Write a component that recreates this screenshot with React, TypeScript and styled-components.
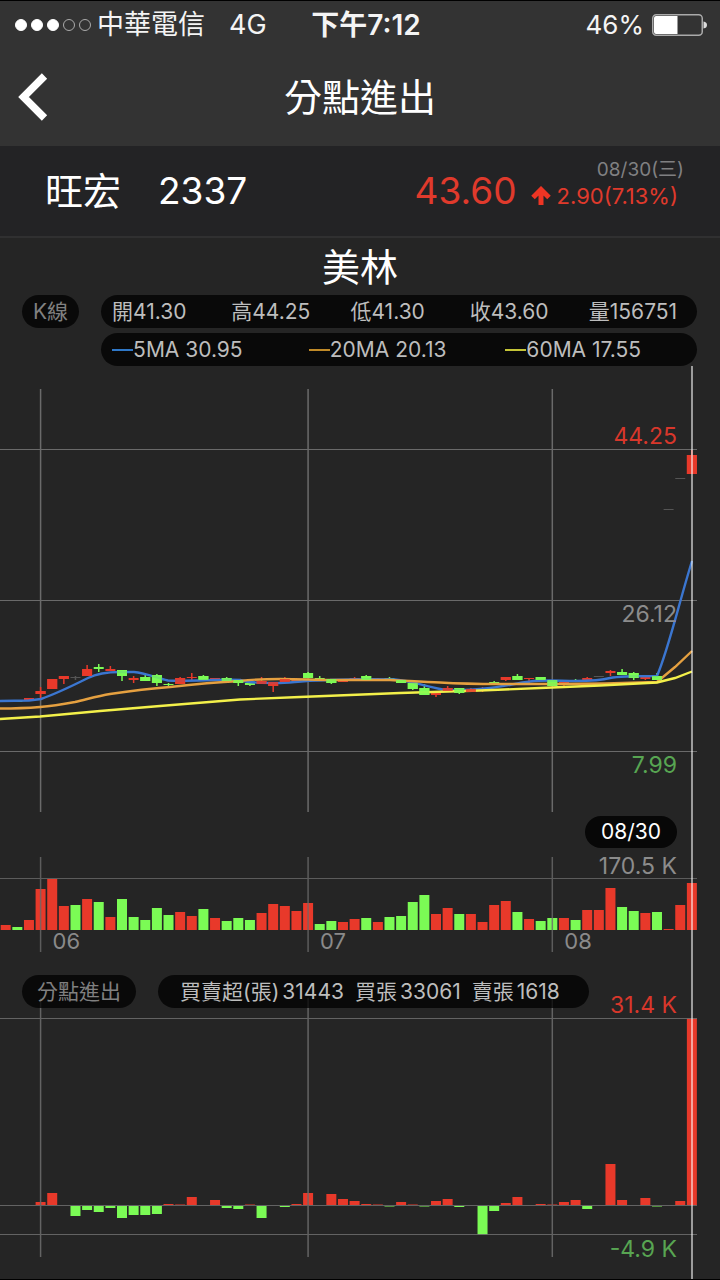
import React from "react";
import styled, { createGlobalStyle } from "styled-components";

const RED = "#e8392a";
const GREEN = "#7bfb55";
const SLOT = 11.63;
const FIRST = 5.7;

type Tone = "r" | "g" | "n";
type Candle = [tone: Tone, top: number, bottom: number, high: number, low: number];

const candles: Candle[] = [
  ["n", 700, 702, 700, 702], ["g", 700, 702, 700, 702], ["r", 698, 700, 698, 700],
  ["r", 691, 694, 687, 698], ["r", 679, 689, 679, 689], ["r", 676, 679, 676, 684],
  ["n", 677, 678, 676, 680], ["r", 669, 676, 665, 676], ["g", 667, 669, 664, 672],
  ["r", 669, 671, 666, 671], ["g", 670, 676, 670, 681], ["r", 678, 680, 676, 683],
  ["g", 677, 681, 675, 681], ["g", 675, 683, 674, 686], ["g", 684, 685, 683, 687],
  ["r", 678, 684, 677, 684], ["r", 677, 678, 673, 680], ["g", 676, 680, 675, 681],
  ["r", 678, 680, 678, 680], ["g", 678, 681, 677, 681], ["g", 680, 683, 679, 686],
  ["g", 683, 685, 682, 686], ["r", 681, 684, 677, 684], ["r", 682, 686, 682, 692],
  ["r", 679, 682, 677, 682], ["r", 679, 681, 678, 681], ["g", 673, 678, 672, 678],
  ["g", 678, 679, 676, 679], ["g", 679, 683, 679, 684], ["r", 680, 682, 679, 682],
  ["r", 678, 680, 677, 681], ["g", 676, 680, 675, 680], ["r", 679, 680, 678, 681],
  ["g", 678, 679, 677, 680], ["g", 680, 683, 680, 683], ["g", 683, 689, 682, 690],
  ["g", 688, 695, 684, 695], ["r", 693, 695, 693, 697], ["r", 688, 691, 686, 692],
  ["g", 688, 693, 688, 694], ["r", 689, 692, 688, 692], ["r", 689, 690, 687, 692],
  ["g", 682, 683, 681, 683], ["r", 677, 680, 677, 681], ["g", 676, 680, 674, 680],
  ["r", 678, 679, 678, 683], ["g", 677, 680, 677, 681], ["g", 680, 686, 680, 686],
  ["r", 682, 684, 680, 686], ["g", 681, 682, 679, 682], ["r", 678, 680, 677, 681],
  ["n", 676, 677, 676, 677], ["r", 671, 673, 670, 676], ["g", 672, 675, 669, 675],
  ["g", 673, 678, 672, 680], ["r", 677, 679, 676, 680], ["g", 676, 680, 673, 680],
  ["n", 509, 510, 509, 510], ["n", 478, 479, 478, 479], ["r", 455, 474, 450, 474],
];

const ma5 =
  "M0 701L29 700.500L41 699C55 694 72 686 88 678C96 674 108 672 120 672H134C146 673 156 678 168 680.500C192 681.500 220 679 240 680C250 683 262 683 280 683C300 682 312 680 330 680C355 679 380 679 395 679.500C412 681 424 686 443 689.500C456 691 470 690 485 688.500C503 687 516 683 530 681.500C545 679.500 560 681 575 681C590 681 603 680 610 678C620 676 640 676 657 676C668 651 679 603 692 561";
const ma20 =
  "M0 708.500C15 708.500 28 708 40 707C52 706 64 704 75 702C88 699 98 696 110 694C130 691 150 688.500 170 687C195 684 217 682 240 681C258 679 270 679 280 679C300 679 315 680 330 680H390C410 681 425 682 440 682.500C465 684 480 684 500 684H560C595 684 630 683 657 682L675 667L692 651";
const ma60 =
  "M0 719L40 716.500L100 711L160 706L240 699.500L300 697L400 693L480 690.500L540 688L600 685.500L657 682.500L675 678L692 671.500";

const volumes: [Tone, number][] = [
  ["r", 5], ["g", 3], ["r", 10], ["r", 41], ["r", 51], ["r", 24], ["g", 25], ["r", 31],
  ["g", 28], ["r", 13], ["g", 31], ["g", 13], ["g", 10], ["g", 22], ["g", 15], ["r", 18],
  ["r", 14], ["g", 21], ["r", 12], ["g", 9], ["g", 12], ["g", 10], ["r", 17], ["r", 26],
  ["r", 24], ["r", 19], ["r", 27], ["g", 6], ["g", 9], ["r", 8], ["r", 11], ["g", 12],
  ["r", 8], ["g", 13], ["g", 14], ["g", 28], ["g", 35], ["r", 16], ["r", 22], ["g", 16],
  ["r", 16], ["r", 8], ["r", 25], ["r", 29], ["g", 18], ["r", 11], ["g", 9], ["g", 12],
  ["r", 12], ["g", 10], ["r", 20], ["r", 20], ["r", 42], ["g", 23], ["g", 19], ["r", 17],
  ["g", 18], ["r", 1], ["r", 25], ["r", 47],
];

const netBuys = [
  0, 0, 0, 3, 12, 0, -10, -4, -6, -2, -12, -9, -9, -8, 1, 0.5, 8, 0, 5, -2, -3, 0.5, -12, 0,
  -1, 1, 12, 0, 11, 6, 4, 1, 0.5, -0.5, 3, 0.5, -0.5, 4, 6, -1, 0, -29, -5, 2, 8, 0, 1, 0.5,
  3, 5, -3, 0, 41, 5, 0, 7, -0.5, 0, 4, 187,
];

const months = [
  { label: "06", slot: 3 },
  { label: "07", slot: 26 },
  { label: "08", slot: 47 },
];

const quotes = [
  ["開", "41.30"], ["高", "44.25"], ["低", "41.30"], ["收", "43.60"], ["量", "156751"],
];

const averages = [
  { color: "#2f78c8", text: "5MA 30.95" },
  { color: "#c08a28", text: "20MA 20.13" },
  { color: "#c4c437", text: "60MA 17.55" },
];

const centre = (slot: number) => FIRST + slot * SLOT;
const fillOf = (tone: Tone) => (tone === "r" ? RED : tone === "g" ? GREEN : "#555");

const GlobalStyle = createGlobalStyle`
  * { box-sizing: border-box; }
  body {
    margin: 0;
    background: #252525;
    color: #fff;
    font-family: Inter, "Noto Sans CJK TC", sans-serif;
  }
`;

const Page = styled.div`
  min-height: 100vh;
  border-top: 1px solid #000;
  border-bottom: 1px solid #000;
  background: #252525;
  overflow: hidden;
`;

const StatusBar = styled.div`
  display: grid;
  grid-template-columns: 1fr auto 1fr;
  align-items: center;
  height: 47px;
  padding: 0 13px 0 15px;
  background: #333;
  font-size: 27px;
  line-height: 32px;
  color: #f4f4f4;
`;

const Carrier = styled.div`
  display: flex;
  align-items: center;
  white-space: nowrap;
`;

const Signal = styled.div`
  display: flex;
  gap: 4px;
  margin-right: 6px;
`;

const Dot = styled.span<{ $on: boolean }>`
  width: 12px;
  height: 12px;
  border-radius: 50%;
  border: 1px solid ${(p) => (p.$on ? "#fff" : "#aaa")};
  background: ${(p) => (p.$on ? "#fff" : "transparent")};
`;

const Network = styled.span`
  margin-left: 24px;
`;

const Clock = styled.time`
  padding-left: 10px;
  font-size: 28px;
  font-weight: 600;
`;

const Power = styled.div`
  display: flex;
  align-items: center;
  justify-content: flex-end;
  gap: 8px;
  font-size: 26px;
`;

const NavBar = styled.header`
  display: grid;
  grid-template-columns: 60px 1fr 60px;
  align-items: center;
  height: 98px;
  background: #333;
`;

const BackButton = styled.button`
  display: flex;
  padding: 0 0 0 18px;
  border: 0;
  background: none;
  color: #fff;
`;

const Title = styled.h1`
  margin: 0;
  font-size: 38px;
  font-weight: 400;
  line-height: 48px;
  text-align: center;
`;

const Quote = styled.section`
  display: flex;
  align-items: center;
  height: 92px;
  padding: 0 36px 0 45px;
  border-bottom: 2px solid #303031;
  background: #232325;
`;

const StockName = styled.h2`
  display: flex;
  flex: 1;
  gap: 37px;
  margin: 0;
  font-size: 38px;
  font-weight: 400;
  line-height: 48px;
`;

const Code = styled.span`
  font-size: 37px;
`;

const Price = styled.strong`
  margin-right: 14px;
  color: #e03a2c;
  font-size: 37px;
  font-weight: 400;
  line-height: 48px;
`;

const Change = styled.div`
  display: flex;
  flex-direction: column;
  align-items: flex-end;
  padding-bottom: 14px;
  line-height: 28px;
`;

const QuoteDate = styled.time`
  color: #808082;
  font-size: 19px;
  line-height: 24px;
`;

const Delta = styled.span`
  display: flex;
  align-items: center;
  gap: 6px;
  padding-right: 6px;
  color: #e03a2c;
  font-size: 22px;
`;

const Branch = styled.h2`
  margin: 0;
  padding: 3px 0 2px;
  font-size: 38px;
  font-weight: 400;
  line-height: 52px;
  text-align: center;
`;

const Legend = styled.div`
  display: flex;
  align-items: flex-start;
  gap: 22px;
  padding: 0 23px 0 22px;
`;

const Pill = styled.div<{ $dim?: boolean; $pad?: number }>`
  height: 33px;
  padding: 0 ${(p) => p.$pad ?? 0}px;
  border-radius: 17px;
  background: rgba(0, 0, 0, 0.75);
  color: ${(p) => (p.$dim ? "#808080" : "#bdbdbd")};
  font-size: 21px;
  line-height: 34px;
  white-space: nowrap;
`;

const LegendRows = styled.div`
  display: grid;
  flex: 1;
  gap: 5px;
`;

const QuotePill = styled(Pill)`
  display: grid;
  grid-template-columns: repeat(5, 1fr);
`;

const AveragePill = styled(Pill)`
  display: grid;
  grid-template-columns: repeat(3, 1fr);
  padding-right: 6px;
`;

const QuoteItem = styled.span`
  padding-left: 11px;
`;

const AverageItem = styled.span<{ $color: string }>`
  display: flex;
  align-items: center;
  padding-left: 11px;
  &::before {
    content: "";
    width: 21px;
    height: 2px;
    background: ${(p) => p.$color};
  }
`;

const Charts = styled.main`
  position: relative;
`;

const Cursor = styled.div`
  position: absolute;
  z-index: 2;
  top: 0;
  bottom: 0;
  right: 27px;
  width: 2px;
  background: rgba(255, 255, 255, 0.55);
`;

const Panel = styled.section<{ $overlap?: boolean }>`
  position: relative;
  margin-top: ${(p) => (p.$overlap ? -10 : 0)}px;
`;

const Plot = styled.svg`
  display: block;
  width: 100%;
`;

const AxisLabel = styled.span<{ $top: number; $color: string }>`
  position: absolute;
  top: ${(p) => p.$top}px;
  right: 43px;
  color: ${(p) => p.$color};
  font-size: 23px;
  line-height: 28px;
`;

const MonthLabel = styled.span`
  position: absolute;
  bottom: 5px;
  margin-left: 12px;
  color: #8a8a8a;
  font-size: 22px;
  line-height: 28px;
`;

const DateRow = styled.div`
  display: flex;
  justify-content: flex-end;
  padding: 4px 43px 0 0;
`;

const DatePill = styled.time`
  height: 32px;
  padding: 0 16px;
  border-radius: 16px;
  background: #070707;
  color: #fff;
  font-size: 21px;
  line-height: 32px;
`;

const BranchLegend = styled.div`
  position: relative;
  z-index: 1;
  display: flex;
  gap: 22px;
  padding: 15px 22px 0;
`;

const BranchStats = styled(Pill)`
  display: flex;
  gap: 11px;
  padding: 0 29px 0 22px;
`;

const Stat = styled.span`
  display: flex;
  gap: 3px;
`;

const GridLines = ({ rows, top, bottom }: { rows: number[]; top: number; bottom: number }) => (
  <g fill="#6a6a6a">
    {rows.map((y) => (
      <rect key={y} x="0" y={y} width="697" height="1" />
    ))}
    {months.map((m) => (
      <rect key={m.label} x={centre(m.slot) - 0.75} y={top} width="1.500" height={bottom - top} />
    ))}
  </g>
);

export default function App() {
  return (
    <>
      <GlobalStyle />
      <Page>
        <StatusBar>
          <Carrier>
            <Signal>
              {[true, true, true, false, false].map((on, i) => (
                <Dot key={i} $on={on} />
              ))}
            </Signal>
            中華電信<Network>4G</Network>
          </Carrier>
          <Clock>下午7:12</Clock>
          <Power>
            46%
            <svg width="55" height="22" viewBox="0 0 55 22" aria-hidden="true">
              <rect x=".75" y=".75" width="49.500" height="20.500" rx="3.500" fill="none" stroke="#aaa" strokeWidth="1.500" />
              <path d="M4 2H25.500V20H4Q2 20 2 18V4Q2 2 4 2Z" fill="#fff" />
              <path d="M51.500 7.500Q55 8 55 11T51.500 14.500Z" fill="#ddd" />
            </svg>
          </Power>
        </StatusBar>

        <NavBar>
          <BackButton aria-label="返回">
            <svg width="30" height="48" viewBox="0 0 30 48" aria-hidden="true">
              <path d="M26.500 3L5.500 24L26.500 45" fill="none" stroke="currentColor" strokeWidth="7.500" />
            </svg>
          </BackButton>
          <Title>分點進出</Title>
        </NavBar>

        <Quote>
          <StockName>
            <span>旺宏</span>
            <Code>2337</Code>
          </StockName>
          <Price>43.60</Price>
          <Change>
            <QuoteDate>08/30(三)</QuoteDate>
            <Delta>
              <svg width="20" height="20" viewBox="0 0 20 20" aria-hidden="true">
                <path d="M10 19V3M2 11.500L10 3.500L18 11.500" fill="none" stroke="#ee3524" strokeWidth="5" />
              </svg>
              2.90(7.13%)
            </Delta>
          </Change>
        </Quote>

        <Branch>美林</Branch>

        <Legend>
          <Pill $dim $pad={11}>K線</Pill>
          <LegendRows>
            <QuotePill>
              {quotes.map(([name, value]) => (
                <QuoteItem key={name}>{name}{value}</QuoteItem>
              ))}
            </QuotePill>
            <AveragePill>
              {averages.map((a) => (
                <AverageItem key={a.text} $color={a.color}>{a.text}</AverageItem>
              ))}
            </AveragePill>
          </LegendRows>
        </Legend>

        <Charts>
          <Cursor />
          <Panel>
            <Plot height="446" viewBox="0 366 720 446" preserveAspectRatio="none">
              <GridLines rows={[449, 600, 751]} top={389} bottom={812} />
              {candles.map(([tone, top, bottom, high, low], i) => (
                <g key={i} fill={fillOf(tone)}>
                  <rect x={centre(i) - 5} y={top} width="10" height={bottom - top} />
                  <rect x={centre(i) - 0.75} y={high} width="1.500" height={low - high} />
                </g>
              ))}
              <g fill="none" strokeWidth="2.400">
                <path d={ma5} stroke="#3b76d0" />
                <path d={ma20} stroke="#e5a040" />
                <path d={ma60} stroke="#f3f04a" />
              </g>
              {candles.map(([tone, top, bottom], i) =>
                tone !== "n" && bottom - top > 2 ? (
                  <rect key={i} x={centre(i) - 5} y={top} width="10" height={bottom - top} fill={fillOf(tone)} opacity=".85" />
                ) : null
              )}
            </Plot>
            <AxisLabel $top={56} $color="#d8372b">44.25</AxisLabel>
            <AxisLabel $top={234} $color="#8c8c8c">26.12</AxisLabel>
            <AxisLabel $top={385} $color="#58a552">7.99</AxisLabel>
          </Panel>

          <DateRow>
            <DatePill>08/30</DatePill>
          </DateRow>

          <Panel>
            <Plot height="112" viewBox="0 848 720 112" preserveAspectRatio="none">
              {volumes.map(([tone, size], i) => (
                <rect key={i} x={centre(i) - 5} y={930 - size} width="10" height={size} fill={fillOf(tone)} />
              ))}
              <g opacity=".8">
                <GridLines rows={[878]} top={857} bottom={952} />
              </g>
            </Plot>
            <AxisLabel $top={4} $color="#8c8c8c">170.5 K</AxisLabel>
            {months.map((m) => (
              <MonthLabel key={m.label} style={{ left: `${(centre(m.slot) / 720) * 100}%` }}>
                {m.label}
              </MonthLabel>
            ))}
          </Panel>

          <BranchLegend>
            <Pill $dim $pad={15}>分點進出</Pill>
            <BranchStats>
              <Stat><span>買賣超(張)</span><span>31443</span></Stat>
              <Stat><span>買張</span><span>33061</span></Stat>
              <Stat><span>賣張</span><span>1618</span></Stat>
            </BranchStats>
          </BranchLegend>

          <Panel $overlap>
            <Plot height="281" viewBox="0 998 720 281" preserveAspectRatio="none">
              {netBuys.map((size, i) => (
                <rect
                  key={i}
                  x={centre(i) - 5}
                  y={size > 0 ? 1205 - size : 1206}
                  width="10"
                  height={Math.abs(size)}
                  fill={size > 0 ? RED : GREEN}
                />
              ))}
              <g opacity=".9">
                <GridLines rows={[1018, 1205, 1234]} top={998} bottom={1257} />
              </g>
            </Plot>
            <AxisLabel $top={-7} $color="#d8372b">31.4 K</AxisLabel>
            <AxisLabel $top={237} $color="#58a552">-4.9 K</AxisLabel>
          </Panel>
        </Charts>
      </Page>
    </>
  );
}
